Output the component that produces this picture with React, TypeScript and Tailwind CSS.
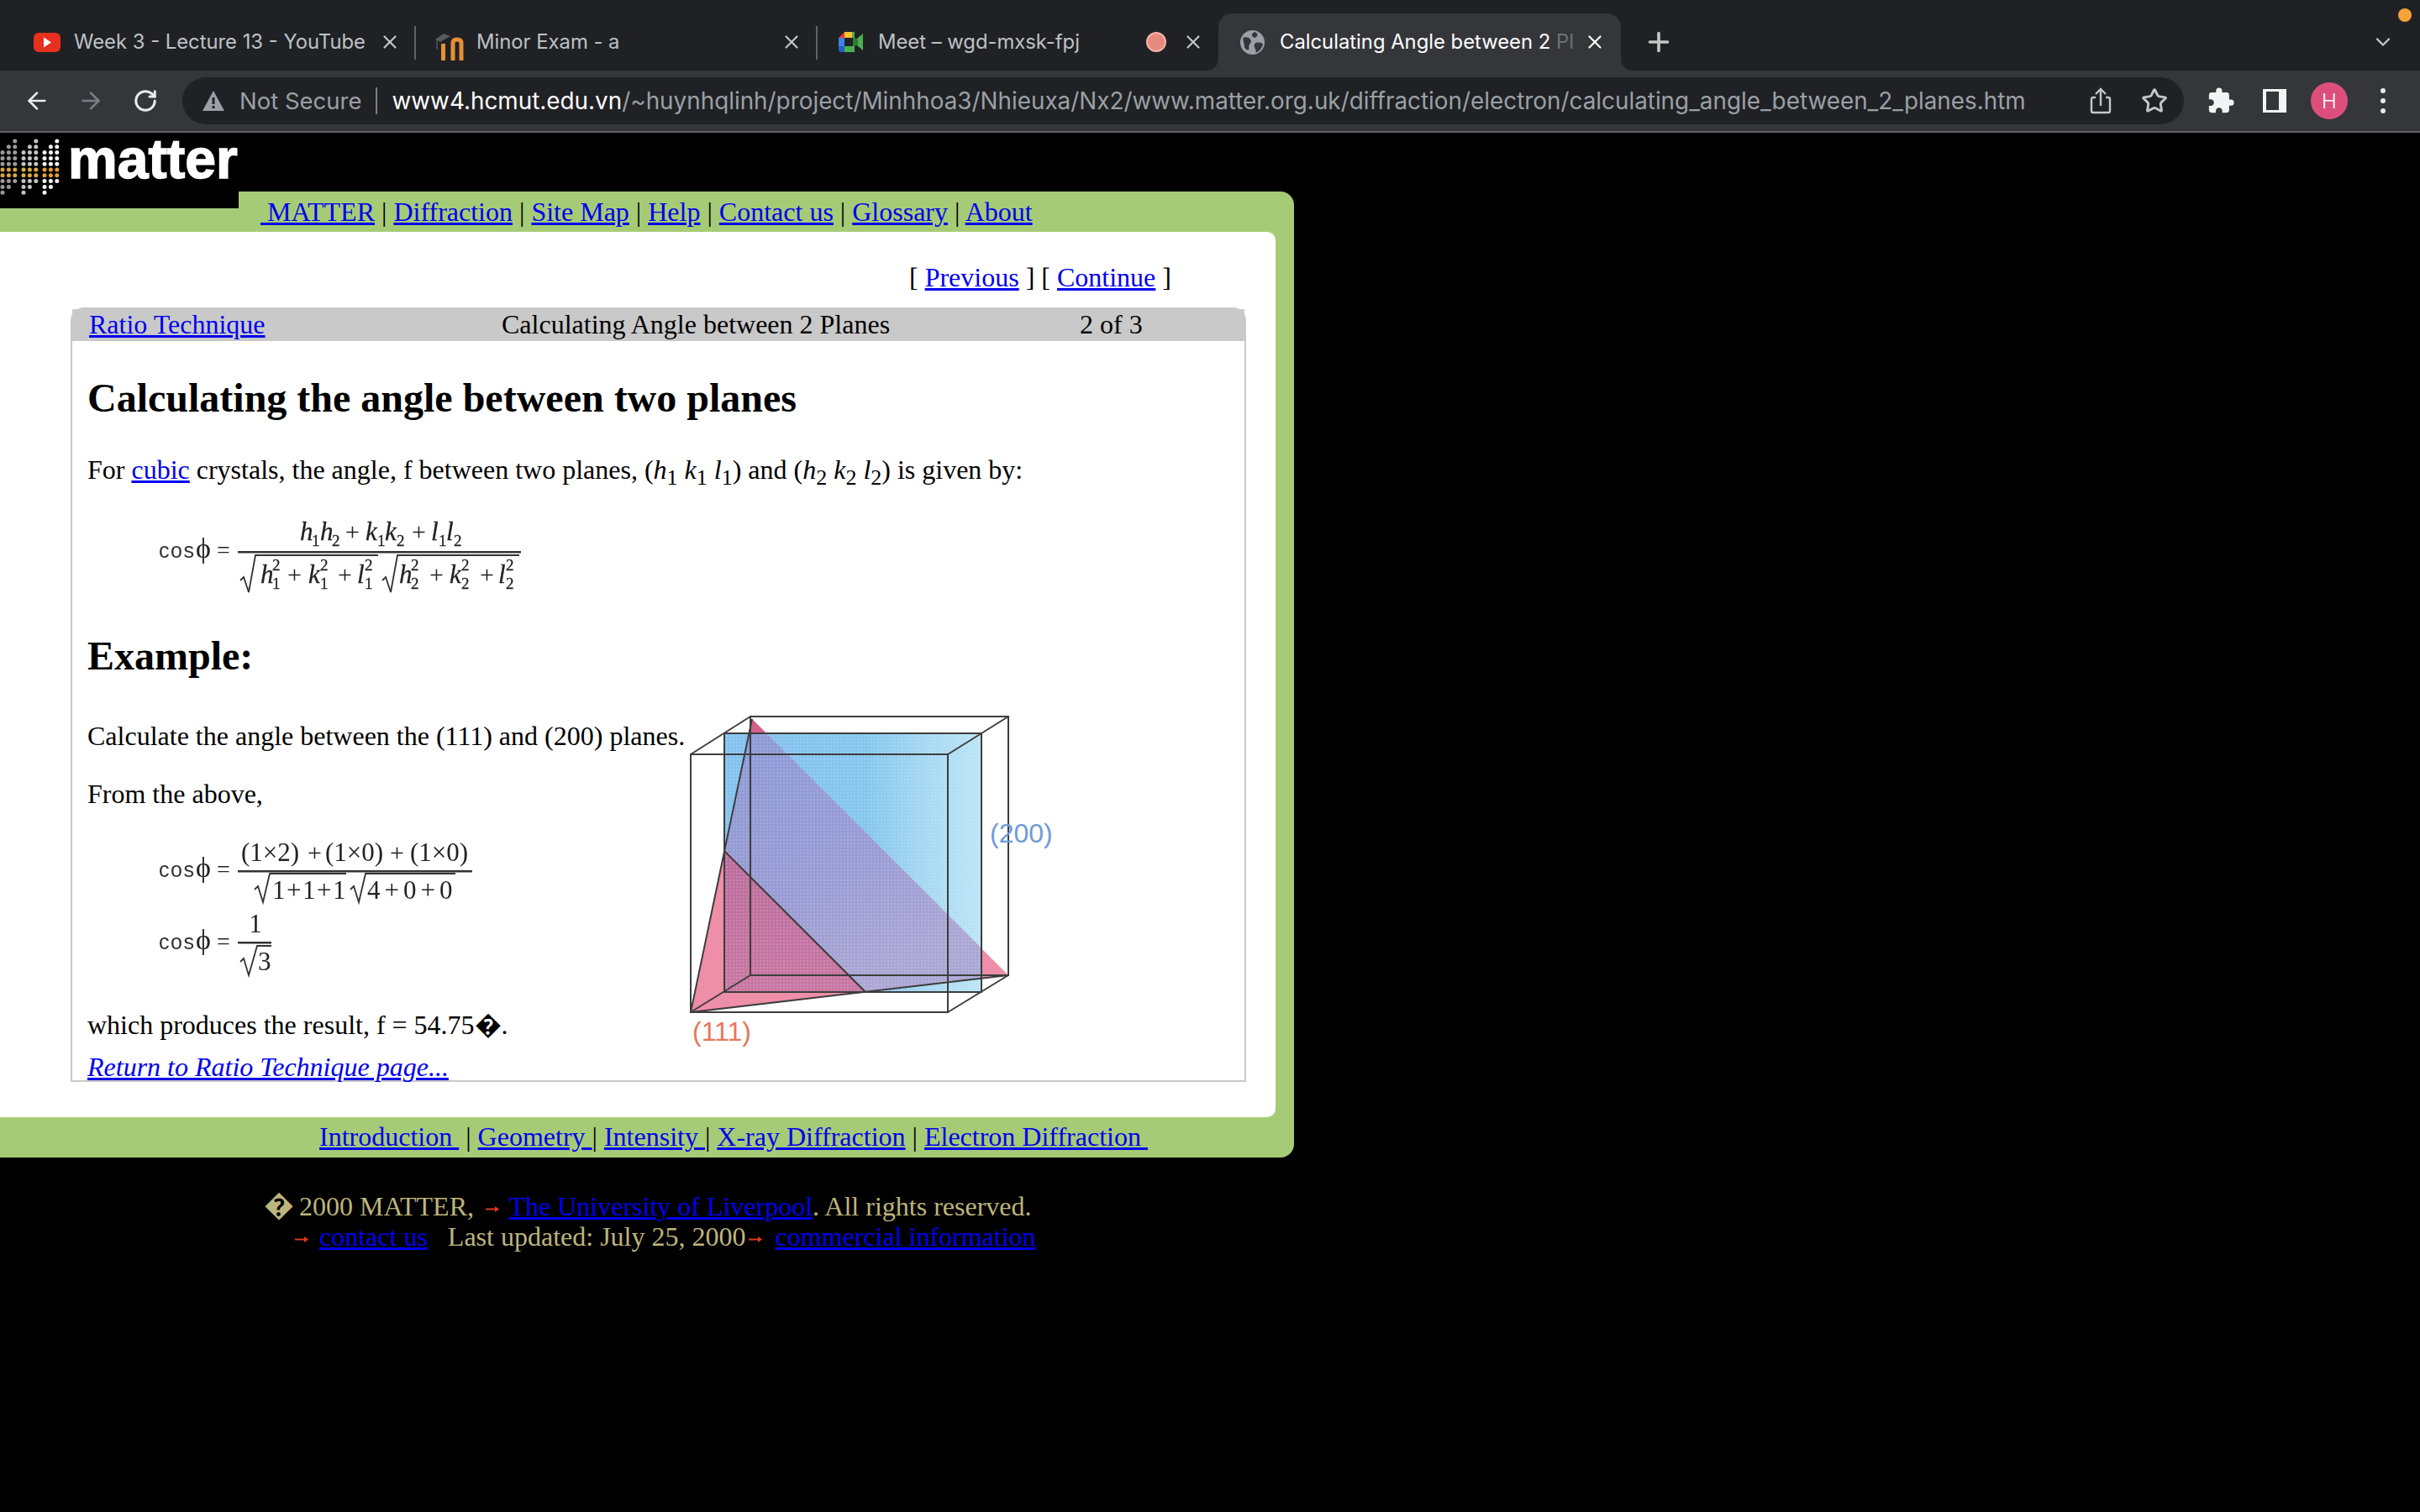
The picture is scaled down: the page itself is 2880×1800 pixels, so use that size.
import { ArrowLeft, ArrowRight, ChevronDown, Plus, RotateCw, Star, X } from "lucide-react";
import { MdExtension } from "react-icons/md";

const SERIF = "font-['Liberation_Serif','Times_New_Roman',serif]";

function YoutubeIcon() {
    return (
        <svg width="32" height="24" viewBox="0 0 32 24">
            <rect x="0" y="0" width="32" height="23" rx="6" fill="#e8301f" />
            <path d="M12 5.5 L21 11.5 L12 17.5 Z" fill="#fff" />
        </svg>
    )
}

function MoodleIcon() {
    return (
        <svg width="38" height="36" viewBox="0 0 38 36">
            <path d="M2 9 L12 2 L20 5 L8 12 Z" fill="#5a5a5a" />
            <rect x="3" y="10" width="2" height="11" fill="#4a4a4a" />
            <rect x="9" y="14" width="5" height="20" fill="#e58f37" />
            <path d="M23 34 V13 Q23 9 28 9 Q33 9 33 13 V34" fill="none" stroke="#e58f37" strokeWidth="5" />
        </svg>
    )
}

function MeetIcon() {
    return (
        <svg width="30" height="25" viewBox="0 0 30 25">
            <path d="M7 0 H19 V7 H7 Z" fill="#fbc02d" />
            <path d="M7 0 V7 H0 Z" fill="#e53935" />
            <path d="M0 7 H7 V17 H0 Z" fill="#3f80ea" />
            <path d="M0 17 H7 V24 H3 Q0 24 0 21 Z" fill="#1f63c4" />
            <path d="M7 17 H19 V21 Q19 24 16 24 H7 Z" fill="#4caf50" />
            <path d="M19 0 V24 L16 24 V17 H17 V7 H16 V0 Z" fill="#4caf50" />
            <path d="M17 12 L29 2 V22 Z" fill="#4caf50" />
            <path d="M17 7 H19 L23 9 V15 L19 17 H17 Z" fill="#2e7d32" />
        </svg>
    )
}

function GlobeIcon() {
    return (
        <svg width="29" height="29" viewBox="0 0 28 28">
            <circle cx="14" cy="14" r="14" fill="#9aa0a6" />
            <path d="M3 9 C7 7 10 8 12 11 C14 14 9 16 10 20 C11 24 7 23 5 20 Z M16 2 C20 3 21 6 18 8 C16 10 14 7 13 5 Z M17 15 C20 13 25 14 26 16 C25 21 21 25 18 26 C19 22 14 19 17 15 Z" fill="#35363a" />
        </svg>
    )
}

function Dots() {
    // logo waveform: three slanted clusters of dots with two gold rows across the middle
    const dots: { x: number; y: number; c: string }[] = []
    const clusters = [
        { x: 3, grey: "#9a9a9a", gold: "#d3a63f" },
        { x: 28, grey: "#c4c4c4", gold: "#dcae3e" },
        { x: 53, grey: "#f2f2f2", gold: "#e59f30" },
    ]
    clusters.forEach((cl) => {
        for (let col = 0; col < 3; col++) {
            const first = 2 - col
            for (let row = first; row < first + 8; row++) {
                const gold = row === 5 || row === 6
                dots.push({ x: cl.x + col * 7.4, y: 10 + row * 6.8, c: gold ? cl.gold : cl.grey })
            }
        }
    })
    return (
        <svg width="76" height="80" viewBox="0 0 76 80" className="block blur-[0.5px]">
            {dots.map((d, i) => <circle key={i} cx={d.x} cy={d.y} r={2.5} fill={d.c} />)}
        </svg>
    )
}

function TabClose({ left, light }: { left: number; light?: boolean }) {
    return <X size={26} strokeWidth={2} className={`absolute top-[21px] ${light ? "text-white" : "text-[#c4c7c5]"}`} style={{ left }} />
}

function BrowserChrome() {
    const tabText = "absolute top-[19px] text-[23.8px] leading-[30px] whitespace-nowrap"
    return (
        <div className="font-['Inter',sans-serif]">
            <div className="relative h-[84px] bg-[#202124] pt-[16px] flex pl-[30px]">
                <div className="relative w-[465px] h-[68px] shrink-0">
                    <div className="absolute left-[10px] top-[23px]"><YoutubeIcon /></div>
                    <span className={`${tabText} left-[58px] text-[#bdc1c6]`}>Week 3 - Lecture 13 - YouTube</span>
                    <TabClose left={421} />
                    <div className="absolute right-0 top-[15px] w-[2px] h-[40px] bg-[#5f6368]" />
                </div>
                <div className="relative w-[478px] h-[68px] shrink-0">
                    <div className="absolute left-[21px] top-[22px]"><MoodleIcon /></div>
                    <span className={`${tabText} left-[72px] text-[#bdc1c6]`}>Minor Exam - a</span>
                    <TabClose left={434} />
                    <div className="absolute right-0 top-[15px] w-[2px] h-[40px] bg-[#5f6368]" />
                </div>
                <div className="relative w-[477px] h-[68px] shrink-0">
                    <div className="absolute left-[25px] top-[22px]"><MeetIcon /></div>
                    <span className={`${tabText} left-[72px] text-[#bdc1c6]`}>Meet – wgd-mxsk-fpj</span>
                    <div className="absolute left-[391px] top-[22px] w-[24px] h-[24px] rounded-full bg-[#e8897f] border-2 border-[#f3b3ab]" />
                    <TabClose left={434} />
                </div>
                <div className="relative w-[479px] h-[68px] shrink-0 bg-[#35363a] rounded-t-[16px]">
                    <div className="absolute left-[26px] top-[20px]"><GlobeIcon /></div>
                    <span className={`${tabText} left-[73px] text-white`}>Calculating Angle between 2 <span className="text-[#6f7074]">Pl</span></span>
                    <TabClose left={435} light />
                    <div className="absolute left-[-14px] bottom-0 w-[14px] h-[14px] bg-[#35363a]"><div className="w-full h-full bg-[#202124] rounded-br-[14px]" /></div>
                    <div className="absolute right-[-14px] bottom-0 w-[14px] h-[14px] bg-[#35363a]"><div className="w-full h-full bg-[#202124] rounded-bl-[14px]" /></div>
                </div>
                <Plus size={36} strokeWidth={2.4} className="ml-[27px] mt-[16px] text-[#c4c7c5]" />
                <ChevronDown size={28} strokeWidth={2} className="absolute left-[2822px] top-[36px] text-[#c4c7c5]" />
                <div className="absolute left-[2854px] top-[10px] w-[16px] h-[16px] rounded-full bg-[#f5a33a]" />
            </div>
            <div className="h-[74px] bg-[#35363a] border-b-2 border-[#5f6064] flex items-start">
                <div className="w-[217px] h-[72px] flex items-center pl-[28px] gap-[32px] shrink-0">
                    <ArrowLeft size={32} strokeWidth={2} className="text-[#e8eaed]" />
                    <ArrowRight size={32} strokeWidth={2} className="text-[#7c7e82]" />
                    <RotateCw size={30} strokeWidth={2.4} className="ml-[2px] text-[#e8eaed]" />
                </div>
                <div className="mt-[8px] w-[2382px] h-[56px] rounded-full bg-[#202124] flex items-center pl-[22px] shrink-0">
                    <svg width="30" height="28" viewBox="0 0 30 28" className="shrink-0">
                        <path d="M15 2 L28 26 H2 Z" fill="#9aa0a6" />
                        <rect x="13.5" y="10" width="3" height="8" fill="#202124" />
                        <rect x="13.5" y="20" width="3" height="3" fill="#202124" />
                    </svg>
                    <span className="ml-[16px] text-[27.5px] text-[#9aa0a6] whitespace-nowrap">Not Secure</span>
                    <div className="ml-[16px] w-[2px] h-[32px] bg-[#7b7e82]" />
                    <span className="ml-[18px] text-[27.85px] whitespace-nowrap text-[#9aa0a6]"><span className="text-white">www4.hcmut.edu.vn</span>/~huynhqlinh/project/Minhhoa3/Nhieuxa/Nx2/www.matter.org.uk/diffraction/electron/calculating_angle_between_2_planes.htm</span>
                    <div className="ml-auto flex items-center gap-[34px] pr-[19px]">
                        <svg width="28" height="34" viewBox="0 0 28 34" fill="none" stroke="#c4c7c5" strokeWidth="2.4">
                            <path d="M8 13 H5 Q3 13 3 15 V29 Q3 31 5 31 H23 Q25 31 25 29 V15 Q25 13 23 13 H20 M14 23 V3 M8 9 L14 3 L20 9" />
                        </svg>
                        <Star size={32} strokeWidth={2.2} className="text-[#c4c7c5]" />
                    </div>
                </div>
                <div className="flex items-center h-[72px] pl-[27px]">
                    <MdExtension size={34} className="text-[#f1f3f4]" />
                    <div className="ml-[33px] w-[28px] h-[28px] border-[3px] border-l-[4px] border-r-[9px] border-[#f1f3f4]" />
                    <div className="ml-[29px] w-[44px] h-[44px] rounded-full bg-[#dc4f7c] flex items-center justify-center text-[24px] font-light text-white">H</div>
                    <div className="ml-[39px] flex flex-col gap-[6px]">
                        <div className="w-[6px] h-[6px] rounded-full bg-[#e8eaed]" />
                        <div className="w-[6px] h-[6px] rounded-full bg-[#e8eaed]" />
                        <div className="w-[6px] h-[6px] rounded-full bg-[#e8eaed]" />
                    </div>
                </div>
            </div>
        </div>
    )
}

function CosPhi({ y }: { y: number }) {
    return (
        <g>
            <text x="5" y={y} fontFamily="'Liberation Sans', sans-serif" fontSize="25" letterSpacing="1.5" fill="#333">cos</text>
            <text x="49" y={y} fontFamily="'Liberation Serif', serif" fontSize="34" fill="#222">ϕ</text>
            <text x="74" y={y} fontFamily="'Liberation Serif', serif" fontSize="28" fill="#222">=</text>
        </g>
    )
}

function Term({ x, y, l, s, sup }: { x: number; y: number; l: string; s: string; sup?: boolean }) {
    const small = { fontFamily: "'Liberation Serif', serif", fontSize: 19, fill: "#222", stroke: "#222", strokeWidth: 0.3 } as const
    return (
        <g>
            <text x={x} y={y} fontFamily="'Liberation Serif', serif" fontStyle="italic" fontSize="31" fill="#222" stroke="#222" strokeWidth="0.3">{l}</text>
            <text x={x + (l === "l" ? 9 : 14)} y={y + 7} {...small}>{s}</text>
            {sup && <text x={x + (l === "l" ? 9 : 14)} y={y - 15} {...small}>2</text>}
        </g>
    )
}

function Sign({ x, y }: { x: number; y: number }) {
    return <text x={x} y={y} fontFamily="'Liberation Serif', serif" fontSize="30" fill="#222">+</text>
}

function FormulaOne() {
    return (
        <svg width="440" height="110" viewBox="0 0 440 110" className="block blur-[0.4px]">
            <CosPhi y={55} />
            <Term x={173} y={34} l="h" s="1" />
            <Term x={197} y={34} l="h" s="2" />
            <Sign x={227} y={34} />
            <Term x={251} y={34} l="k" s="1" />
            <Term x={274} y={34} l="k" s="2" />
            <Sign x={306} y={34} />
            <Term x={329} y={34} l="l" s="1" />
            <Term x={347} y={34} l="l" s="2" />
            <rect x="99" y="47" width="337" height="2.5" fill="#333" />
            <path d="M102 82 L106 78 L112 96 L120 52 H266" fill="none" stroke="#333" strokeWidth="1.8" />
            <path d="M271 82 L275 78 L281 96 L289 52 H434" fill="none" stroke="#333" strokeWidth="1.8" />
            <Term x={126} y={85} l="h" s="1" sup />
            <Sign x={158} y={85} />
            <Term x={183} y={85} l="k" s="1" sup />
            <Sign x={218} y={85} />
            <Term x={241} y={85} l="l" s="1" sup />
            <Term x={291} y={85} l="h" s="2" sup />
            <Sign x={327} y={85} />
            <Term x={351} y={85} l="k" s="2" sup />
            <Sign x={387} y={85} />
            <Term x={409} y={85} l="l" s="2" sup />
        </svg>
    )
}

function FormulaTwo() {
    const t = { fontFamily: "'Liberation Serif', serif", fontSize: 31, fill: "#222" } as const
    return (
        <svg width="400" height="190" viewBox="0 0 400 190" className="block blur-[0.4px]">
            <CosPhi y={47} />
            <text x="103" y="28" {...t}>(1×2)</text>
            <Sign x={182} y={28} />
            <text x="203" y="28" {...t}>(1×0)</text>
            <Sign x={280} y={28} />
            <text x="304" y="28" {...t}>(1×0)</text>
            <rect x="99" y="39" width="279" height="2.5" fill="#333" />
            <path d="M119 62 L123 58 L129 77 L137 43 H228" fill="none" stroke="#333" strokeWidth="1.8" />
            <text x="140" y="73" {...t} letterSpacing="1.5">1+1+1</text>
            <path d="M233 62 L237 58 L243 77 L251 43 H358" fill="none" stroke="#333" strokeWidth="1.8" />
            <text x="253" y="73" {...t} wordSpacing="-2.75">4 + 0 + 0</text>
            <CosPhi y={133} />
            <text x="120" y="113" textAnchor="middle" {...t}>1</text>
            <rect x="99" y="124" width="40" height="2.5" fill="#333" />
            <path d="M102 148 L106 144 L112 164 L122 129 H139" fill="none" stroke="#333" strokeWidth="1.8" />
            <text x="123" y="158" {...t}>3</text>
        </svg>
    )
}

function CubeFigure() {
    return (
        <svg width="460" height="420" viewBox="815 845 460 420" className="block">
            <defs>
                <linearGradient id="blueFill" x1="0" x2="1" y1="0" y2="0">
                    <stop offset="0" stopColor="#86c2ee" />
                    <stop offset="0.55" stopColor="#86c6ee" />
                    <stop offset="0.8" stopColor="#a9d9f3" />
                    <stop offset="1" stopColor="#bde5f6" />
                </linearGradient>
                <linearGradient id="overlapFill" x1="0" x2="0.5" y1="0" y2="1">
                    <stop offset="0" stopColor="#8d9ad6" />
                    <stop offset="0.6" stopColor="#9a9bd4" />
                    <stop offset="1" stopColor="#ada6d3" />
                </linearGradient>
                <linearGradient id="pinkDark" x1="0" x2="0" y1="0" y2="1">
                    <stop offset="0" stopColor="#bb6c9c" />
                    <stop offset="1" stopColor="#cb76a2" />
                </linearGradient>
                <pattern id="dither" width="4" height="4" patternUnits="userSpaceOnUse">
                    <circle cx="1" cy="1" r="0.7" fill="#d8f4ff" opacity="0.55" />
                </pattern>
            </defs>
            <rect x="862" y="874" width="306" height="308" fill="url(#blueFill)" />
            {/* (111) plane */}
            <path d="M895 857 L822 1206 L1200 1162 Z" fill="#ef8ea8" />
            <path d="M895 857 L891 874 L912 874 Z" fill="#d2608c" />
            {/* part behind the blue plane, then part in front of it */}
            <path d="M891 874 L912 874 L1168 1130 L1168 1166 L1030 1182 L862 1012 Z" fill="url(#overlapFill)" />
            <path d="M862 1015 L1030 1182 L862 1182 Z" fill="url(#pinkDark)" />
            <rect x="862" y="874" width="306" height="308" fill="url(#dither)" />
            <g fill="none" stroke="#3d3d3d" strokeWidth="2" className="blur-[0.3px]">
                <rect x="822" y="899" width="306" height="307" />
                <rect x="862" y="874" width="306" height="308" />
                <rect x="893" y="854" width="307" height="308" />
                <path d="M822 899 L893 854 M1128 899 L1200 854 M1128 1206 L1200 1162 M822 1206 L893 1162" />
                <path d="M895 857 L822 1206 L1200 1162 M862 1014 L1030 1182" />
            </g>
            <text x="824" y="1240" fontFamily="'Liberation Sans', sans-serif" fontSize="32" fill="#e8765a">(111)</text>
            <text x="1178" y="1004" fontFamily="'Liberation Sans', sans-serif" fontSize="32" fill="#6f9bd8">(200)</text>
        </svg>
    )
}

function RedArrow({ className }: { className: string }) {
    return (
        <svg width="16" height="9" viewBox="0 0 16 9" className={`inline-block align-middle ${className}`}>
            <path d="M0 3.5 H11 V1 L16 4.5 L11 8 V5.5 H0 Z" fill="#e0391c" />
        </svg>
    )
}

const linkCls = "text-[#0000ee] underline"

export default function App() {
    return (
        <div className={`h-[1800px] w-[2880px] overflow-hidden bg-black text-[32px] leading-[37px] ${SERIF}`}>
            <BrowserChrome />
            <main className="relative pt-[70px]">
                <div className="absolute left-0 top-0 w-[284px] h-[90px] bg-black flex items-start">
                    <Dots />
                    <span className="ml-[5px] mt-[-7px] text-[66px] leading-[76px] font-bold text-white blur-[0.5px] [-webkit-text-stroke:1.5px_white] font-['Liberation_Sans',sans-serif]">matter</span>
                </div>

                <div className="w-[1540px] h-[1150px] bg-[#a6cb77] rounded-r-[16px]">
                    <nav className="h-[48px] pl-[310px] pt-[6px] whitespace-pre">
                        <a className={linkCls}> MATTER</a> | <a className={linkCls}>Diffraction</a> | <a className={linkCls}>Site Map</a> | <a className={linkCls}>Help</a> | <a className={linkCls}>Contact us</a> | <a className={linkCls}>Glossary</a> | <a className={linkCls}>About</a>
                    </nav>
                    <div className="w-[1518px] h-[1054px] bg-white rounded-r-[10px] text-black pt-[36px]">
                        <div className="pl-[1082px] h-[54px] whitespace-pre">[ <a className={linkCls}>Previous</a> ] [ <a className={linkCls}>Continue</a> ]</div>
                        <div className="ml-[84px] w-[1399px] h-[922px] border-2 border-[#c9c9c9] rounded-t-[16px]">
                            <div className="h-[38px] bg-[#c9c9c9] grid grid-cols-[491px_688px_1fr] pl-[20px]">
                                <a className={linkCls}>Ratio Technique</a>
                                <span>Calculating Angle between 2 Planes</span>
                                <span>2 of 3</span>
                            </div>
                            <div className="pl-[18px]">
                                <h1 className="mt-[40px] text-[48px] leading-[56px] font-bold">Calculating the angle between two planes</h1>
                                <p className="mt-[39px]">For <a className={linkCls}>cubic</a> crystals, the angle, f between two planes, (<i>h</i><sub className="text-[26px]">1</sub> <i>k</i><sub className="text-[26px]">1</sub> <i>l</i><sub className="text-[26px]">1</sub>) and (<i>h</i><sub className="text-[26px]">2</sub> <i>k</i><sub className="text-[26px]">2</sub> <i>l</i><sub className="text-[26px]">2</sub>) is given by:</p>
                                <div className="mt-[31px] ml-[80px]"><FormulaOne /></div>
                                <h1 className="mt-[34px] text-[48px] leading-[56px] font-bold">Example:</h1>
                                <div className="flex">
                                    <div className="w-[711px] shrink-0">
                                        <p className="mt-[49px] whitespace-nowrap">Calculate the angle between the (111) and (200) planes.</p>
                                        <p className="mt-[32px]">From the above,</p>
                                        <div className="mt-[33px] ml-[80px]"><FormulaTwo /></div>
                                        <p className="mt-[15px] whitespace-nowrap">which produces the result, f = 54.75�.</p>
                                        <p className="mt-[13px] italic whitespace-nowrap"><a className={linkCls}>Return to Ratio Technique page...</a></p>
                                    </div>
                                    <div className="mt-[35px]"><CubeFigure /></div>
                                </div>
                            </div>
                        </div>
                    </div>
                    <nav className="h-[48px] pl-[380px] pt-[5px] whitespace-pre">
                        <a className={linkCls}>Introduction </a> | <a className={linkCls}>Geometry </a>| <a className={linkCls}>Intensity </a>| <a className={linkCls}>X-ray Diffraction</a> | <a className={linkCls}>Electron Diffraction </a>
                    </nav>
                </div>

                <footer className="mt-[39px] pl-[314px] text-[#bdb57c] whitespace-pre">
                    <div className="h-[37px]"><span className="inline-block w-[34px] text-[36px] leading-[37px]">�</span> 2000 MATTER, <RedArrow className="ml-[6px] mr-[4px]" /> <a className={linkCls}>The University of Liverpool</a>. All rights reserved.</div>
                    <div className="h-[37px] pl-[37px]"><RedArrow className="mr-[5px]" /> <a className={linkCls}>contact us</a>   Last updated: July 25, 2000<RedArrow className="ml-[4px] mr-[7px]" /> <a className={linkCls}>commercial information</a></div>
                </footer>
            </main>
        </div>
    )
}
